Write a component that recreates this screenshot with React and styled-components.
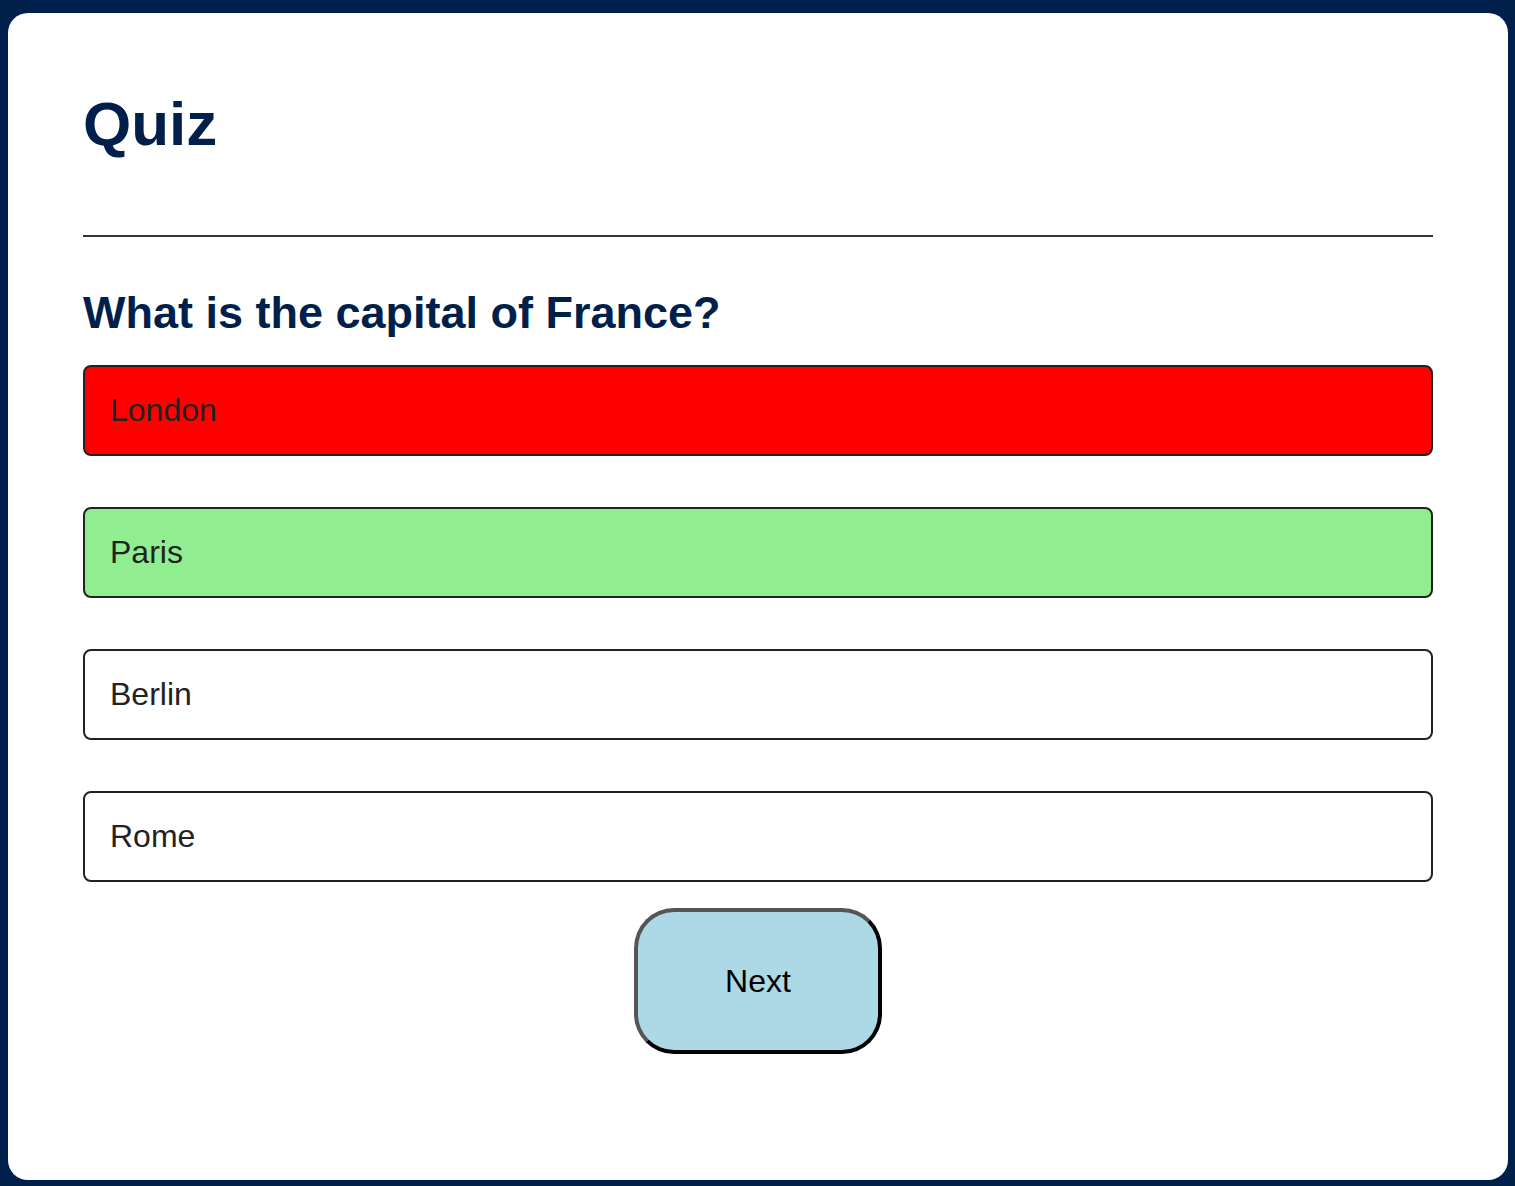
import styled, { createGlobalStyle } from "styled-components";

const GlobalStyle = createGlobalStyle`
  html, body {
    margin: 0;
    padding: 0;
    background: #011f4b;
    font-family: "Liberation Sans", Arial, sans-serif;
  }
`

const Page = styled.div`
  box-sizing: border-box;
  min-height: 100vh;
  padding: 13px 7px 6px 8px;
`

const Card = styled.div`
  box-sizing: border-box;
  height: 1167px;
  background: #fff;
  border-radius: 20px;
  padding: 75px 75px 0;
  display: flex;
  flex-direction: column;
`

const Title = styled.h1`
  margin: 0;
  font-size: 62px;
  line-height: 71px;
  font-weight: 700;
  color: #011f4b;
`

const Divider = styled.hr`
  margin: 76px 0 0;
  border: none;
  border-top: 2px solid #333;
`

const Question = styled.h2`
  margin: 50px 0 26px;
  font-size: 45px;
  line-height: 52px;
  font-weight: 700;
  color: #011f4b;
`

const Options = styled.div`
  display: flex;
  flex-direction: column;
  gap: 51px;
`

const bg = { wrong: "#ff0000", right: "#90ee90", none: "#fff" }

const Option = styled.button`
  box-sizing: border-box;
  height: 91px;
  width: 100%;
  padding: 0 25px;
  text-align: left;
  font-family: inherit;
  font-size: 32px;
  color: #222;
  background: ${p => bg[p.state]};
  border: 2px solid #222;
  border-radius: 8px;
`

const NextButton = styled.button`
  box-sizing: border-box;
  align-self: center;
  margin-top: 26px;
  width: 248px;
  height: 146px;
  font-family: inherit;
  font-size: 32px;
  color: #000;
  background: #add8e6;
  border: 4px solid;
  border-color: #555 #000 #000 #555;
  border-radius: 40px;
`

const answers = [
  { text: "London", state: "wrong" },
  { text: "Paris", state: "right" },
  { text: "Berlin", state: "none" },
  { text: "Rome", state: "none" },
]

export default function App() {
  return (
    <Page>
      <GlobalStyle />
      <Card>
        <Title>Quiz</Title>
        <Divider />
        <Question>What is the capital of France?</Question>
        <Options>
          {answers.map(a => (
            <Option key={a.text} state={a.state}>{a.text}</Option>
          ))}
        </Options>
        <NextButton>Next</NextButton>
      </Card>
    </Page>
  )
}
